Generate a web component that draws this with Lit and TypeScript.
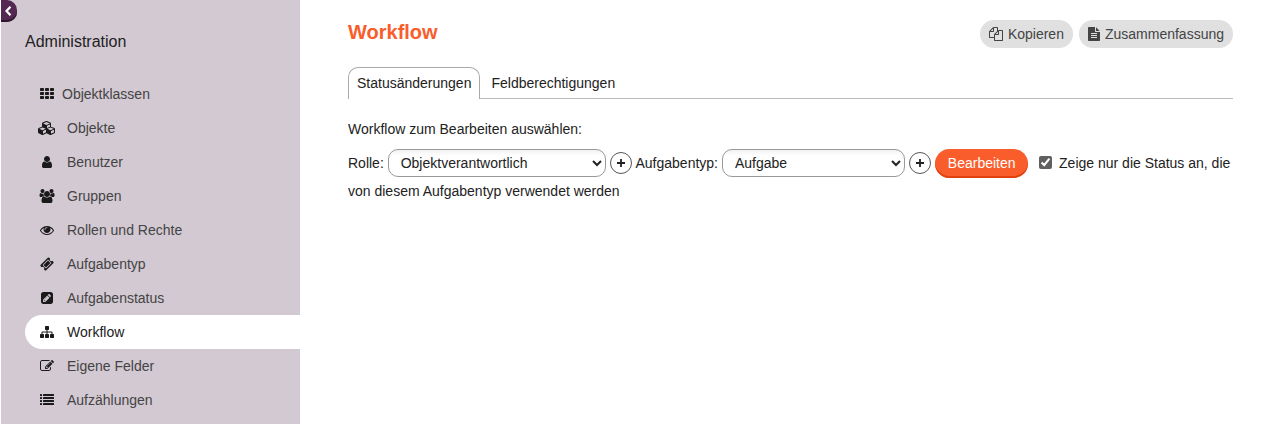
import { LitElement, html, css, svg } from "lit";
import { customElement } from "lit/decorators.js";

const bar = (x: number, y: number, w: number, h: number, r: number) =>
  svg`<rect x=${x} y=${y} width=${w} height=${h} rx=${r}></rect>`;

const icons: Record<string, { w: number; body: unknown }> = {
  th: {
    w: 1792,
    body: [128, 640, 1152].map((y) => [0, 640, 1280].map((x) => bar(x, y, 512, 384, 96))),
  },
  cubes: {
    w: 2304,
    body: svg`<path d="M640 1632l384-192v-314l-384 164v342zm-64-454l404-173-404-173-404 173zm1088 454l384-192v-314l-384 164v342zm-64-454l404-173-404-173-404 173zm-448-293l384-165v-266l-384 164v267zm-64-379l441-189-441-189-441 189zm1088 518v416q0 36-19 67t-52 47l-448 224q-25 14-57 14t-57-14l-448-224q-4-2-7-4-2 2-7 4l-448 224q-25 14-57 14t-57-14l-448-224q-33-16-52-47t-19-67v-416q0-38 21.5-70t56.5-48l434-186v-400q0-38 21.5-70t56.5-48l448-192q23-10 50-10t50 10l448 192q35 16 56.5 48t21.5 70v400l434 186q36 16 57 48t21 70z"/>`,
  },
  user: {
    w: 1792,
    body: svg`<path d="M1536 1399q0 109-62.5 187t-150.5 78h-854q-88 0-150.5-78t-62.5-187q0-85 8.5-160.5t31.5-152 58.5-131 94-89 134.5-34.5q131 128 313 128t313-128q76 0 134.5 34.5t94 89 58.5 131 31.5 152 8.5 160.5zm-256-887q0 159-112.5 271.5t-271.5 112.5-271.5-112.5-112.5-271.5 112.5-271.5 271.5-112.5 271.5 112.5 112.5 271.5z"/>`,
  },
  users: {
    w: 2048,
    body: svg`<path d="M657 896q-162 5-265 128h-134q-82 0-138-40.5t-56-118.5q0-353 124-353 6 0 43.5 21t97.5 42.5 119 21.5q67 0 133-23-5 37-5 66 0 159 93 293zm1071 637q0 120-73 189.5t-194 69.5h-874q-121 0-194-69.5t-73-189.5q0-53 3.5-103.5t14-109 26.5-108.5 43-97.5 62-81 85.5-53.5 111.5-20q10 0 43 21.5t73 48 107 48 135 21.5 135-21.5 107-48 73-48 43-21.5q61 0 111.5 20t85.5 53.5 62 81 43 97.5 26.5 108.5 14 109 3.5 103.5zm-1024-1277q0 106-75 181t-181 75-181-75-75-181 75-181 181-75 181 75 75 181zm704 384q0 159-112.5 271.5t-271.5 112.5-271.5-112.5-112.5-271.5 112.5-271.5 271.5-112.5 271.5 112.5 112.5 271.5zm576 225q0 78-56 118.5t-138 40.5h-134q-103-123-265-128 93-134 93-293 0-29-5-66 66 23 133 23 59 0 119-21.5t97.5-42.5 43.5-21q124 0 124 353zm-128-609q0 106-75 181t-181 75-181-75-75-181 75-181 181-75 181 75 75 181z"/>`,
  },
  eye: {
    w: 1792,
    body: svg`<path d="M1664 960q-152-236-381-353 61 104 61 225 0 185-131.5 316.5t-316.5 131.5-316.5-131.5-131.5-316.5q0-121 61-225-229 117-381 353 133 205 333.5 326.5t434.5 121.5 434.5-121.5 333.5-326.5zm-720-384q0-20-14-34t-34-14q-125 0-214.5 89.5t-89.5 214.5q0 20 14 34t34 14 34-14 14-34q0-86 61-147t147-61q20 0 34-14t14-34zm848 384q0 34-20 69-140 230-376.5 368.5t-499.5 138.5-499.5-139-376.5-368q-20-35-20-69t20-69q140-229 376.5-368t499.5-139 499.5 139 376.5 368q20 35 20 69z"/>`,
  },
  ticket: {
    w: 1792,
    body: svg`<path d="M1024 452l316 316-572 572-316-316zm-211 979l618-618q19-19 19-45t-19-45l-362-362q-18-18-45-18t-45 18l-618 618q-19 19-19 45t19 45l362 362q18 18 45 18t45-18zm889-637l-907 908q-37 37-90.5 37t-90.5-37l-126-126q56-56 56-136t-56-136-136-56-136 56l-125-126q-37-37-37-90.5t37-90.5l907-906q37-37 90.5-37t90.5 37l125 125q-56 56-56 136t56 136 136 56 136-56l126 125q37 37 37 90.5t-37 90.5z"/>`,
  },
  pencilSquare: {
    w: 1536,
    body: svg`<path transform="translate(0 1536) scale(1 -1)" d="M404 428l152 -152l-52 -52h-56v96h-96v56zM818 818q14 -13 -3 -30l-291 -291q-17 -17 -30 -3q-14 13 3 30l291 291q17 17 30 3zM544 128l544 544l-288 288l-544 -544v-288h288zM1152 736l92 92q28 28 28 68t-28 68l-152 152q-28 28 -68 28t-68 -28l-92 -92zM1536 1120v-960q0 -119 -84.5 -203.5t-203.5 -84.5h-960q-119 0 -203.5 84.5t-84.5 203.5v960q0 119 84.5 203.5t203.5 84.5h960q119 0 203.5 -84.5t84.5 -203.5z"/>`,
  },
  sitemap: {
    w: 1792,
    body: svg`<path d="M1792 1248v320q0 40-28 68t-68 28h-320q-40 0-68-28t-28-68v-320q0-40 28-68t68-28h96v-192h-512v192h96q40 0 68 28t28 68v320q0 40-28 68t-68 28h-320q-40 0-68-28t-28-68v-320q0-40 28-68t68-28h96v-192h-512v192h96q40 0 68 28t28 68v320q0 40-28 68t-68 28h-320q-40 0-68-28t-28-68v-320q0-40 28-68t68-28h96v-192q0-52 38-90t90-38h512v-192h-96q-40 0-68-28t-28-68v-320q0-40 28-68t68-28h320q40 0 68 28t28 68v320q0 40-28 68t-68 28h-96v192h512q52 0 90 38t38 90v192h96q40 0 68 28t28 68z"/>`,
  },
  edit: {
    w: 1792,
    body: svg`<path d="M888 1184l116-116-152-152-116 116v56h96v96h56zm440-720q-16-16-33 1l-350 350q-17 17-1 33t33-1l350-350q17-17 1-33zm80 594v190q0 119-84.5 203.5t-203.5 84.5h-832q-119 0-203.5-84.5t-84.5-203.5v-832q0-119 84.5-203.5t203.5-84.5h832q63 0 117 25 15 7 18 23 3 17-9 29l-49 49q-14 14-32 8-23-6-45-6h-832q-66 0-113 47t-47 113v832q0 66 47 113t113 47h832q66 0 113-47t47-113v-126q0-13 9-22l64-64q15-15 35-7t20 29zm-96-738l288 288-672 672h-288v-288zm444 132l-92 92-288-288 92-92q28-28 68-28t68 28l152 152q28 28 28 68t-28 68z"/>`,
  },
  list: {
    w: 1792,
    body: [128, 512, 896, 1280].map((y) => [bar(0, y, 256, 256, 32), bar(384, y, 1408, 256, 32)]),
  },
  files: {
    w: 1792,
    body: svg`<path d="M1696 384q40 0 68 28t28 68v1216q0 40-28 68t-68 28h-960q-40 0-68-28t-28-68v-288h-544q-40 0-68-28t-28-68v-672q0-40 20-88t48-76l408-408q28-28 76-48t88-20h416q40 0 68 28t28 68v328q68-40 128-40h416zm-544 213l-299 299h299v-299zm-640-384l-299 299h299v-299zm196 647l316-316v-416h-384v416q0 40-28 68t-68 28h-416v640h512v-256q0-40 20-88t48-76zm956 804v-1152h-384v416q0 40-28 68t-68 28h-416v640h896z"/>`,
  },
  fileText: {
    w: 1536,
    body: svg`<path d="M1024 512v-472q22 14 36 28l408 408q14 14 28 36zM896 544q0 40 28 68t68 28h544v1056q0 40-28 68t-68 28h-1344q-40 0-68-28t-28-68v-1600q0-40 28-68t68-28h800zM384 768v128h768v-128zM384 1024v128h768v-128zM384 1280v128h768v-128z"/>`,
  },
};

const icon = (name: string, size = 14) => {
  const { w, body } = icons[name];
  return html`<svg class="icon" width=${(w / 1792) * size} height=${size} viewBox="0 0 ${w} 1792" fill-rule="evenodd" aria-hidden="true">${body}</svg>`;
};

const entries = [
  { icon: "th", label: "Objektklassen", tight: true },
  { icon: "cubes", label: "Objekte" },
  { icon: "user", label: "Benutzer" },
  { icon: "users", label: "Gruppen" },
  { icon: "eye", label: "Rollen und Rechte" },
  { icon: "ticket", label: "Aufgabentyp" },
  { icon: "pencilSquare", label: "Aufgabenstatus" },
  { icon: "sitemap", label: "Workflow", active: true },
  { icon: "edit", label: "Eigene Felder" },
  { icon: "list", label: "Aufzählungen" },
];

@customElement("app-root")
export class AppRoot extends LitElement {
  static styles = css`
    :host {
      display: flex;
      height: 424px;
      overflow: hidden;
      background: #fff;
      color: #222;
      font: 14px/28px "Liberation Sans", Arial, sans-serif;
    }
    * { box-sizing: border-box; }
    .icon { display: block; fill: currentColor; flex: none; }
    .sidebar {
      position: relative;
      width: 299px;
      margin-left: 1px;
      flex: none;
      background: #d3c9d2;
    }
    .toggle {
      position: absolute;
      top: 0;
      left: 0;
      width: 16px;
      height: 22px;
      padding: 0;
      border: 0;
      border-radius: 0 10px 10px 0;
      background: #532853;
      box-shadow: inset 0 -2px 0 #301530;
    }
    .toggle svg { display: block; margin: 0 0 0 3px; }
    .title { margin: 0; padding: 28px 0 0 24px; font-size: 16px; font-weight: 400; }
    .menu { list-style: none; margin: 21px 0 0 24px; padding: 0; }
    .entry {
      display: flex;
      align-items: center;
      height: 34px;
      padding-left: 8px;
      color: #444;
    }
    .active { background: #fff; border-radius: 17px 0 0 17px; color: #222; }
    .slot {
      display: flex;
      justify-content: center;
      width: 28px;
      margin-right: 6px;
      color: #1a1a1a;
    }
    .tight { margin-right: 1px; }
    .main { flex: 1; padding: 20px 48px 0; min-width: 0; }
    .head { display: flex; justify-content: space-between; height: 28px; }
    .head h2 { margin: 0; color: #f95d2c; font-size: 20px; line-height: 25px; }
    .actions { display: flex; gap: 6px; }
    .action {
      display: flex;
      align-items: center;
      gap: 5px;
      height: 28px;
      padding: 0 9px;
      border-radius: 14px;
      background: #e0e0e0;
      color: #444;
    }
    .tabs {
      display: flex;
      height: 32px;
      margin-top: 19px;
    }
    .tab { padding: 1px 11px 0; line-height: 31px; border-bottom: 1px solid #bbb; flex: 1; }
    .current {
      flex: none;
      padding: 0 8px;
      border: 1px solid #aaa;
      border-bottom: 0;
      border-radius: 10px 10px 0 0;
    }
    .intro { margin: 16px 0 0; }
    .form { margin: 6px 0 0; }
    .select {
      height: 28px;
      margin: -3px 0 -1px;
      padding: 0 0 0 8px;
      border: 1px solid #999;
      border-radius: 10px;
      background: linear-gradient(#f2f2f2, #fff 6px);
      color: #222;
      font: inherit;
      vertical-align: middle;
    }
    .role { width: 218px; }
    .type { width: 183px; }
    .plus {
      display: inline-block;
      width: 22px;
      height: 22px;
      margin: -1px 0 1px;
      vertical-align: middle;
    }
    .plus.spaced { margin-right: 0.8px; }
    .submit {
      width: 93px;
      height: 29px;
      margin: -3px 0 -1px;
      padding: 0 0 1px 1px;
      border: 0;
      border-radius: 15px;
      background: #f95d2c;
      box-shadow: inset 0 -2px 0 #e2410f;
      color: #fff;
      font: inherit;
      line-height: 28px;
      vertical-align: middle;
    }
    .check {
      width: 13px;
      height: 13px;
      margin: 0 3.6px 0 7px;
      accent-color: #606060;
      vertical-align: -1px;
    }
  `;

  private plus(extra = "") {
    return html`<svg class="plus ${extra}" viewBox="0 0 22 22" fill="none"><circle cx="11" cy="11" r="10.5" stroke="#555"/><path d="M7 11H15M11 7V15" stroke="#222" stroke-width="1.8"/></svg>`;
  }

  render() {
    return html`
      <aside class="sidebar">
        <button class="toggle" aria-label="Menü">
          <svg width="9" height="10" viewBox="0 0 9 10" fill="none"><path d="M6.5 .8L2.5 5L6.5 9.2" stroke="#fff" stroke-width="2.2"/></svg>
        </button>
        <h1 class="title">Administration</h1>
        <ul class="menu">
          ${entries.map(
            (e) => html`<li class="entry ${e.active ? "active" : ""}"><span class="slot ${e.tight ? "tight" : ""}">${icon(e.icon)}</span>${e.label}</li>`
          )}
        </ul>
      </aside>
      <main class="main">
        <div class="head">
          <h2>Workflow</h2>
          <div class="actions">
            <a class="action">${icon("files")}Kopieren</a>
            <a class="action">${icon("fileText")}Zusammenfassung</a>
          </div>
        </div>
        <nav class="tabs"><a class="tab current">Statusänderungen</a><a class="tab">Feldberechtigungen</a></nav>
        <p class="intro">Workflow zum Bearbeiten auswählen:</p>
        <div class="form">
          <span>Rolle:</span>
          <select class="select role"><option>Objektverantwortlich</option></select>
          ${this.plus("spaced")}
          <span>Aufgabentyp:</span>
          <select class="select type"><option>Aufgabe</option></select>
          ${this.plus()}
          <button class="submit">Bearbeiten</button>
          <input class="check" type="checkbox" checked />
          <span>Zeige nur die Status an, die von diesem Aufgabentyp verwendet werden</span>
        </div>
      </main>
    `;
  }
}
